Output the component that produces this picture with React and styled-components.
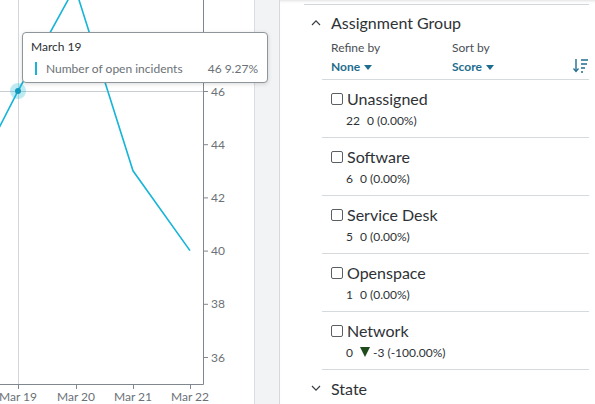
import React from 'react';
import styled, { createGlobalStyle } from 'styled-components';

const GlobalStyle = createGlobalStyle`
  *, *::before, *::after {
    box-sizing: border-box;
  }
  html, body {
    margin: 0;
    padding: 0;
    background: #ffffff;
    font-family: Lato, "Open Sans", sans-serif;
  }
`;

const Page = styled.div`
  position: relative;
  display: flex;
  width: 595px;
  height: 404px;
  overflow: hidden;
  background: #ffffff;
`;

const ChartPanel = styled.div`
  width: 255px;
  flex: none;
  background: #ffffff;
  border-right: 1px solid #dadde0;
  overflow: hidden;
`;

const Gutter = styled.div`
  width: 25px;
  flex: none;
  background: #f2f3f5;
  border-right: 1px solid #d6d9dc;
`;

const FilterPanel = styled.div`
  flex: 1;
  background: #ffffff;
  padding: 0 7px 0 24px;
  box-shadow: inset 0 3px 3px -2px rgba(0, 0, 0, 0.12);
`;

const TopRule = styled.div`
  margin-top: 4px;
  border-top: 1px solid #d3d7da;
`;

const SectionHeader = styled.div`
  display: flex;
  align-items: center;
  height: ${(p) => p.$height}px;
  padding-left: 7px;
  gap: 10px;
  color: #2e3236;
  font-size: 16px;
`;

const GroupBody = styled.div`
  margin-left: 18px;
`;

const Controls = styled.div`
  display: flex;
  align-items: flex-start;
  padding: 2px 0 4px 9px;
  border-bottom: 1px solid #d6dadd;
`;

const Control = styled.div`
  width: 121px;
  display: flex;
  flex-direction: column;
  gap: 4px;
`;

const ControlLabel = styled.span`
  font-size: 12px;
  line-height: 14px;
  color: #4a4f54;
`;

const ControlValue = styled.span`
  display: flex;
  align-items: center;
  gap: 4px;
  font-size: 12px;
  line-height: 16px;
  font-weight: 700;
  color: #1f6d8e;
`;

const SortButton = styled.div`
  margin-left: auto;
  margin-top: 18px;
  display: flex;
`;

const Item = styled.div`
  height: 58px;
  padding: 8px 0 10px 9px;
  border-bottom: 1px solid #d6dadd;
`;

const ItemLabel = styled.label`
  display: flex;
  align-items: center;
  gap: 4px;
  height: 20px;
  font-size: 16px;
  color: #2e3236;
`;

const Box = styled.span`
  width: 12px;
  height: 12px;
  margin-top: 2px;
  border: 1px solid #5a5f64;
  border-radius: 2px;
  background: #ffffff;
  flex: none;
`;

const ItemSub = styled.div`
  display: flex;
  align-items: center;
  margin-top: 5px;
  padding-left: 15px;
  height: 14px;
  font-size: 12px;
  color: #2e3236;
`;

const Count = styled.span`
  margin-right: 7px;
`;

const Down = styled.span`
  display: inline-block;
  width: 0;
  height: 0;
  margin-right: 3px;
  border-left: 5px solid transparent;
  border-right: 5px solid transparent;
  border-top: 10px solid #1e4a1c;
`;

const Tooltip = styled.div`
  position: absolute;
  left: 22px;
  top: 32px;
  width: 246px;
  height: 51px;
  padding: 0 9px 0 8px;
  background: #ffffff;
  border: 1px solid #8e959b;
  border-radius: 4px;
  box-shadow: 0 1px 4px rgba(0, 0, 0, 0.15);
  z-index: 2;
`;

const TipTitle = styled.div`
  margin-top: 6px;
  height: 16px;
  font-size: 12px;
  line-height: 16px;
  color: #2b2f33;
`;

const TipRow = styled.div`
  display: flex;
  align-items: center;
  margin-top: 6px;
  font-size: 12px;
  color: #6b7177;
`;

const TipSwatch = styled.span`
  width: 2px;
  height: 13px;
  margin: 0 9px 0 4px;
  background: #16b5d8;
`;

const TipValue = styled.span`
  margin-left: auto;
`;

const Chevron = ({ up }) => (
  <svg width="10" height="7" viewBox="0 0 10 7">
    <path
      d={up ? 'M1 6 L5 1.8 L9 6' : 'M1 1 L5 5.2 L9 1'}
      fill="none"
      stroke="#3a3e42"
      strokeWidth="1.2"
    />
  </svg>
);

const Caret = () => (
  <svg width="8" height="5" viewBox="0 0 8 5">
    <path d="M0 0 L8 0 L4 5 Z" fill="#1f6d8e" />
  </svg>
);

const SortIcon = () => (
  <svg width="16" height="14" viewBox="0 0 16 14">
    <path d="M3 0 V12" stroke="#1f6d8e" strokeWidth="1.4" />
    <path d="M0.5 9.5 L3 12.5 L5.5 9.5" fill="none" stroke="#1f6d8e" strokeWidth="1.2" />
    <path d="M8 1 H15 M8 5 H14 M8 9 H12 M8 13 H10" stroke="#1f6d8e" strokeWidth="1.3" />
  </svg>
);

const yOf = (v) => 91 + ((46 - v) / 2) * 53.2;
const xTicks = [
  { x: 18, label: 'Mar 19' },
  { x: 76, label: 'Mar 20' },
  { x: 133, label: 'Mar 21' },
  { x: 190, label: 'Mar 22' },
];
const yTicks = [46, 44, 42, 40, 38, 36];
const points = [
  [-40, yOf(41.75)],
  [18, yOf(46)],
  [75, yOf(49.9)],
  [133, yOf(43)],
  [190, yOf(40)],
];

const Chart = () => (
  <svg width="254" height="404" viewBox="0 0 254 404" style={{ display: 'block' }}>
    <line x1="18.5" y1="0" x2="18.5" y2="384" stroke="#d4d8dc" />
    <line x1="0" y1="91.5" x2="203" y2="91.5" stroke="#c9cdd1" />
    <line x1="203.5" y1="0" x2="203.5" y2="384.5" stroke="#80878e" />
    <line x1="0" y1="384.5" x2="203.5" y2="384.5" stroke="#80878e" />
    {yTicks.map((v) => (
      <g key={v}>
        <line x1="204" y1={yOf(v) + 0.5} x2="208" y2={yOf(v) + 0.5} stroke="#80878e" />
        <text x="211" y={yOf(v) + 4.5} fontSize="12" fill="#6b7177" fontFamily="Lato">
          {v}
        </text>
      </g>
    ))}
    {xTicks.map((t) => (
      <g key={t.label}>
        <line x1={t.x + 0.5} y1="385" x2={t.x + 0.5} y2="389" stroke="#80878e" />
        <text x={t.x} y="401" fontSize="12" fill="#6b7177" fontFamily="Lato" textAnchor="middle">
          {t.label}
        </text>
      </g>
    ))}
    <polyline
      points={points.map((p) => p.join(',')).join(' ')}
      fill="none"
      stroke="#16b5d8"
      strokeWidth="1.6"
    />
    <circle cx="18" cy="91" r="8" fill="rgba(22,181,216,0.28)" />
    <circle cx="18" cy="91" r="3" fill="#1399bc" />
  </svg>
);

const groups = [
  { name: 'Unassigned', count: '22', change: '0 (0.00%)' },
  { name: 'Software', count: '6', change: '0 (0.00%)' },
  { name: 'Service Desk', count: '5', change: '0 (0.00%)' },
  { name: 'Openspace', count: '1', change: '0 (0.00%)' },
  { name: 'Network', count: '0', change: '-3 (-100.00%)', down: true },
];

export default function App() {
  return (
    <Page>
      <GlobalStyle />
      <ChartPanel>
        <Chart />
      </ChartPanel>
      <Gutter />
      <FilterPanel>
        <TopRule />
        <SectionHeader $height={34}>
          <Chevron up />
          Assignment Group
        </SectionHeader>
        <GroupBody>
          <Controls>
            <Control>
              <ControlLabel>Refine by</ControlLabel>
              <ControlValue>
                None <Caret />
              </ControlValue>
            </Control>
            <Control>
              <ControlLabel>Sort by</ControlLabel>
              <ControlValue>
                Score <Caret />
              </ControlValue>
            </Control>
            <SortButton>
              <SortIcon />
            </SortButton>
          </Controls>
          {groups.map((g) => (
            <Item key={g.name}>
              <ItemLabel>
                <Box />
                {g.name}
              </ItemLabel>
              <ItemSub>
                <Count>{g.count}</Count>
                {g.down && <Down />}
                {g.change}
              </ItemSub>
            </Item>
          ))}
        </GroupBody>
        <SectionHeader $height={36}>
          <Chevron />
          State
        </SectionHeader>
      </FilterPanel>
      <Tooltip>
        <TipTitle>March 19</TipTitle>
        <TipRow>
          <TipSwatch />
          Number of open incidents
          <TipValue>46 9.27%</TipValue>
        </TipRow>
      </Tooltip>
    </Page>
  );
}
